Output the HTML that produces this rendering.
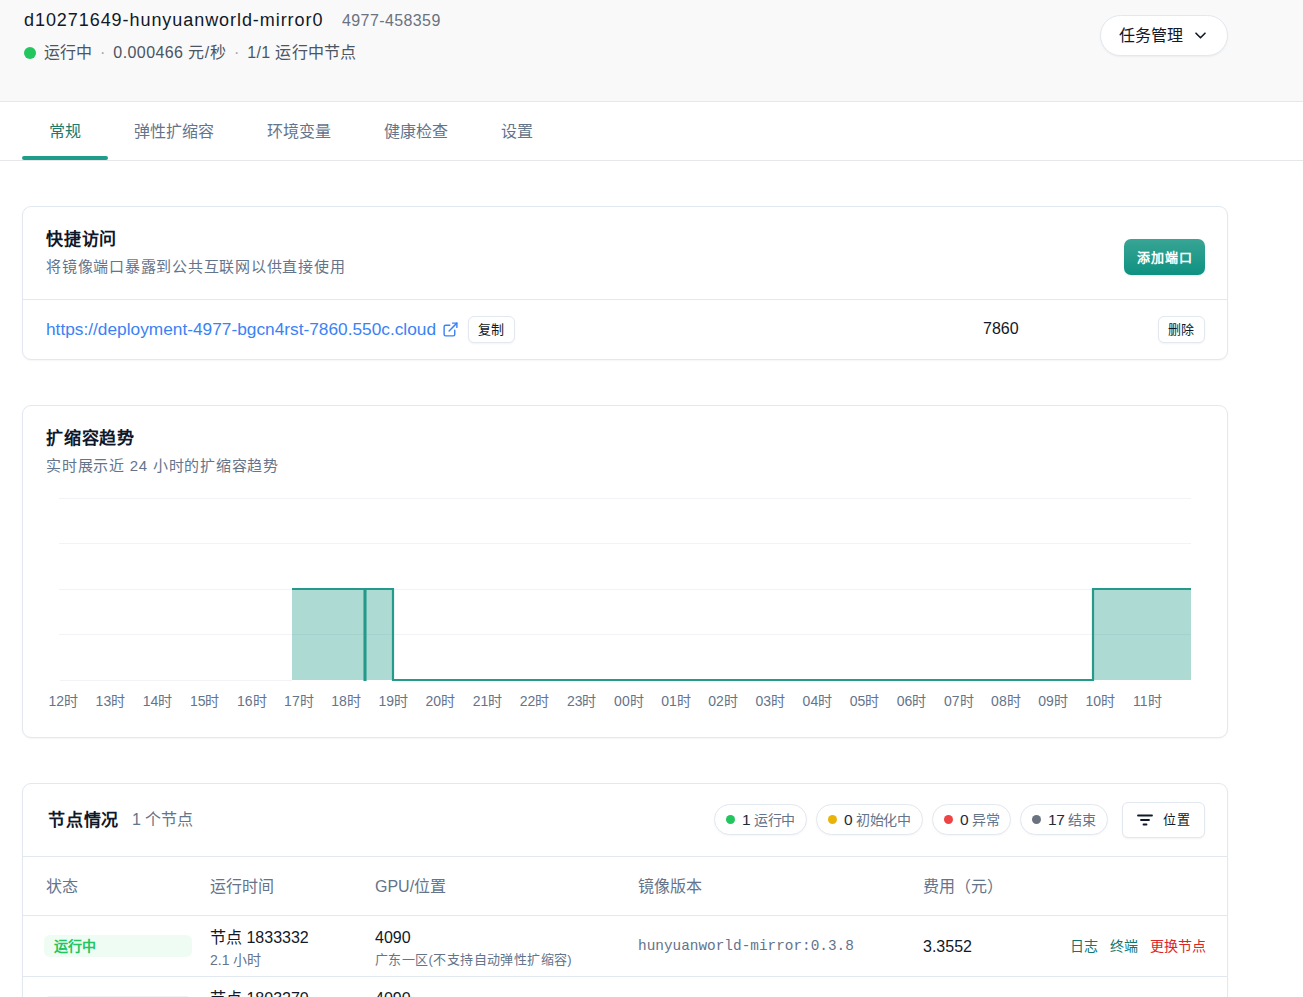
<!DOCTYPE html>
<html lang="zh-CN">
<head>
<meta charset="utf-8">
<title>d10271649-hunyuanworld-mirror0</title>
<style>
*{box-sizing:border-box;margin:0;padding:0}
html,body{width:1303px;height:997px;overflow:hidden;background:#ffffff}
body{font-family:"Liberation Sans",sans-serif;color:#111827;position:relative}
.abs{position:absolute;white-space:nowrap}
.hdr{position:absolute;left:0;top:0;width:1303px;height:102px;background:#f9f9fa;border-bottom:1px solid #e5e7eb}
.title{left:24px;top:8px;font-size:18px;line-height:24px;color:#111827;letter-spacing:0.94px}
.jobid{left:342px;top:10px;font-size:16px;line-height:22px;color:#6b7280;letter-spacing:0.4px}
.status{left:24px;top:42px;font-size:16px;line-height:22px;color:#4b5563;display:flex;align-items:center}
.gdot{display:inline-block;width:12px;height:12px;border-radius:50%;background:#22c55e;margin-right:8px}
.sep{margin:0 8px;color:#9ca3af}
.taskbtn{left:1100px;top:15px;width:128px;height:41px;border:1px solid #e2e8f0;border-radius:21px;background:#fff;box-shadow:0 1px 2px rgba(0,0,0,.05)}
.taskbtn span{position:absolute;left:18px;top:9px;font-size:16px;line-height:22px;color:#111827}
.taskbtn svg{position:absolute;left:94px;top:16px}
.tabs{position:absolute;left:0;top:102px;width:1303px;height:59px;border-bottom:1px solid #e5e7eb;background:#fff}
.tab{position:absolute;top:19px;font-size:16px;line-height:22px;color:#64748b}
.tab.on{color:#1a7a6e}
.uline{position:absolute;left:22px;top:54px;width:86px;height:4px;border-radius:2px;background:#1f9d8a}
.card{position:absolute;left:22px;width:1206px;border:1px solid #e2e8f0;border-radius:9px;background:#fff;box-shadow:0 1px 2px rgba(15,23,42,.04)}
.ctitle{position:absolute;left:23px;font-size:17px;letter-spacing:0.8px;line-height:24px;font-weight:bold;color:#0f172a}
.csub{position:absolute;left:23px;font-size:15px;letter-spacing:0.75px;line-height:22px;color:#64748b}
.btn-teal{position:absolute;left:1101px;top:32px;width:81px;height:36px;border-radius:7px;background:linear-gradient(#38a595,#0e9181);color:#fff;font-size:13px;letter-spacing:1px;font-weight:bold;line-height:38px;text-align:center;box-shadow:0 1px 2px rgba(0,0,0,.08)}
.divider{position:absolute;left:0;width:1204px;height:1px;background:#e2e8f0}
.link{position:absolute;left:23px;top:111px;font-size:17.3px;line-height:22px;color:#3b82f6}
.smbtn{position:absolute;height:27px;border:1px solid #e2e8f0;border-radius:6px;background:#fff;font-size:13px;letter-spacing:0.8px;line-height:25px;text-align:center;color:#111827;box-shadow:0 1px 2px rgba(0,0,0,.05)}
.grid{position:absolute;height:1px;background:#f1f3f6}
.xl{position:absolute;top:286px;font-size:14px;line-height:18px;color:#64748b;text-align:center;width:40px}
.pill{position:absolute;top:20px;height:31px;border:1px solid #e2e8f0;border-radius:16px;background:#fff;box-shadow:0 1px 2px rgba(0,0,0,.04);font-size:14px;letter-spacing:-0.3px;line-height:29px;color:#64748b;padding-left:11px}
.pill i{display:inline-block;width:9px;height:9px;border-radius:50%;vertical-align:middle;margin-right:7px;position:relative;top:-1.5px}
.pill b{font-weight:normal;color:#1f2937;font-size:15.5px}
.th{position:absolute;top:92px;font-size:16px;line-height:22px;color:#64748b}
.td{position:absolute;font-size:16px;line-height:22px;color:#111827}
.tds{position:absolute;font-size:14px;line-height:18px;color:#64748b}
.badge{position:absolute;left:21px;width:148px;height:22px;border-radius:6px;background:#effcf3;color:#22c55e;font-size:14px;font-weight:bold;line-height:22px;padding-left:10px}
.mono{position:absolute;font-family:"Liberation Mono",monospace;font-size:14.4px;line-height:20px;color:#64748b}
.act{position:absolute;top:128px;font-size:14px;line-height:20px}
</style>
</head>
<body>
<div class="hdr">
  <div class="abs title">d10271649-hunyuanworld-mirror0</div>
  <div class="abs jobid">4977-458359</div>
  <div class="abs status"><span class="gdot"></span>运行中<span class="sep">·</span><span style="letter-spacing:0.42px">0.000466 元/秒</span><span class="sep">·</span><span style="letter-spacing:0.3px">1/1 运行中节点</span></div>
  <div class="abs taskbtn"><span>任务管理</span><svg width="12" height="8" viewBox="0 0 12 8"><path d="M1 1.2 L5.5 5.8 L10 1.2" fill="none" stroke="#111827" stroke-width="1.6" stroke-linecap="round" stroke-linejoin="round"/></svg></div>
</div>
<div class="tabs">
  <div class="tab on" style="left:49px">常规</div>
  <div class="tab" style="left:134px">弹性扩缩容</div>
  <div class="tab" style="left:267px">环境变量</div>
  <div class="tab" style="left:384px">健康检查</div>
  <div class="tab" style="left:501px">设置</div>
  <div class="uline"></div>
</div>

<!-- Card 1 -->
<div class="card" style="top:206px;height:154px">
  <div class="ctitle" style="top:21px">快捷访问</div>
  <div class="csub" style="top:49px">将镜像端口暴露到公共互联网以供直接使用</div>
  <div class="btn-teal">添加端口</div>
  <div class="divider" style="top:92px"></div>
  <div class="link">https://deployment-4977-bgcn4rst-7860.550c.cloud</div>
  <svg style="position:absolute;left:419px;top:114px" width="17" height="17" viewBox="0 0 24 24" fill="none" stroke="#3b82f6" stroke-width="2" stroke-linecap="round" stroke-linejoin="round"><path d="M18 13v6a2 2 0 0 1-2 2H5a2 2 0 0 1-2-2V8a2 2 0 0 1 2-2h6"/><path d="M15 3h6v6"/><path d="M10 14 21 3"/></svg>
  <div class="smbtn" style="left:445px;top:109px;width:47px">复制</div>
  <div class="td" style="left:960px;top:111px;font-size:16px">7860</div>
  <div class="smbtn" style="left:1135px;top:109px;width:47px">删除</div>
</div>

<!-- Card 2 -->
<div class="card" style="top:405px;height:333px">
  <div class="ctitle" style="top:21px">扩缩容趋势</div>
  <div class="csub" style="top:48.5px">实时展示近 24 小时的扩缩容趋势</div>
  <div class="grid" style="left:36px;top:92px;width:1132px"></div>
  <div class="grid" style="left:36px;top:137px;width:1132px"></div>
  <div class="grid" style="left:36px;top:183px;width:1132px"></div>
  <div class="grid" style="left:36px;top:228px;width:1132px"></div>
  <svg style="position:absolute;left:0;top:0" width="1204" height="331" viewBox="0 0 1204 331">
    <path d="M269 183 H370 V274 H269 Z M1070 183 H1168 V274 H1070 Z" fill="#2a9d8f" fill-opacity="0.38"/>
    <path d="M37 274.5 H269" stroke="#f1f3f6" stroke-width="1"/>
    <path d="M269 183 H342 V275 V183 H370 V274 H1070 V183 H1168" fill="none" stroke="#259a8a" stroke-width="2.2"/>
    <path d="M342 183 V275" stroke="#259a8a" stroke-width="3"/>
  </svg>
  <div class="xl" style="left:20.3px">12时</div><div class="xl" style="left:67.4px">13时</div><div class="xl" style="left:114.6px">14时</div><div class="xl" style="left:161.7px">15时</div><div class="xl" style="left:208.8px">16时</div><div class="xl" style="left:255.9px">17时</div><div class="xl" style="left:303.1px">18时</div><div class="xl" style="left:350.2px">19时</div><div class="xl" style="left:397.3px">20时</div><div class="xl" style="left:444.5px">21时</div><div class="xl" style="left:491.6px">22时</div><div class="xl" style="left:538.7px">23时</div><div class="xl" style="left:585.9px">00时</div><div class="xl" style="left:633.0px">01时</div><div class="xl" style="left:680.1px">02时</div><div class="xl" style="left:727.2px">03时</div><div class="xl" style="left:774.4px">04时</div><div class="xl" style="left:821.5px">05时</div><div class="xl" style="left:868.6px">06时</div><div class="xl" style="left:915.8px">07时</div><div class="xl" style="left:962.9px">08时</div><div class="xl" style="left:1010.0px">09时</div><div class="xl" style="left:1057.2px">10时</div><div class="xl" style="left:1104.3px">11时</div>
</div>

<!-- Card 3 -->
<div class="card" style="top:783px;height:260px">
  <div class="ctitle" style="left:25px;top:25px">节点情况</div>
  <div class="csub" style="left:109px;top:25px;font-size:16px;letter-spacing:0">1 个节点</div>
  <div class="pill" style="left:691px;width:93px"><i style="background:#22c55e"></i><b>1</b> 运行中</div>
  <div class="pill" style="left:793px;width:107px"><i style="background:#eab308"></i><b>0</b> 初始化中</div>
  <div class="pill" style="left:909px;width:79px"><i style="background:#ef4444"></i><b>0</b> 异常</div>
  <div class="pill" style="left:997px;width:88px"><i style="background:#6b7280"></i><b>17</b> 结束</div>
  <div class="smbtn" style="left:1099px;top:18px;width:83px;height:36px;line-height:34px;text-align:left;padding-left:40px">位置
    <svg style="position:absolute;left:14px;top:11px" width="16" height="12" viewBox="0 0 16 12"><path d="M1 1.5H15M4 6H12M6.5 10.5H9.5" stroke="#111827" stroke-width="1.8" stroke-linecap="round"/></svg>
  </div>
  <div class="divider" style="top:72px"></div>
  <div class="th" style="left:23px">状态</div>
  <div class="th" style="left:187px">运行时间</div>
  <div class="th" style="left:352px">GPU/位置</div>
  <div class="th" style="left:615px">镜像版本</div>
  <div class="th" style="left:900px">费用（元）</div>
  <div class="divider" style="top:131px"></div>
  <div class="badge" style="top:151px">运行中</div>
  <div class="td" style="left:187px;top:143px">节点 1833332</div>
  <div class="tds" style="left:187px;top:167px">2.1 小时</div>
  <div class="td" style="left:352px;top:143px">4090</div>
  <div class="tds" style="left:352px;top:167px;font-size:13px;letter-spacing:0.4px">广东一区(不支持自动弹性扩缩容)</div>
  <div class="mono" style="left:615px;top:152px">hunyuanworld-mirror:0.3.8</div>
  <div class="td" style="left:900px;top:152px">3.3552</div>
  <div class="act" style="left:1047px;top:152px;color:#0f766e">日志</div>
  <div class="act" style="left:1087px;top:152px;color:#0f766e">终端</div>
  <div class="act" style="left:1127px;top:152px;color:#dc2626">更换节点</div>
  <div class="divider" style="top:192px"></div>
  <div class="badge" style="top:212px;background:#f1f3f5;color:#6b7280"></div>
  <div class="td" style="left:187px;top:204px">节点 1803270</div>
  <div class="td" style="left:352px;top:204px">4090</div>
</div>
</body>
</html>
